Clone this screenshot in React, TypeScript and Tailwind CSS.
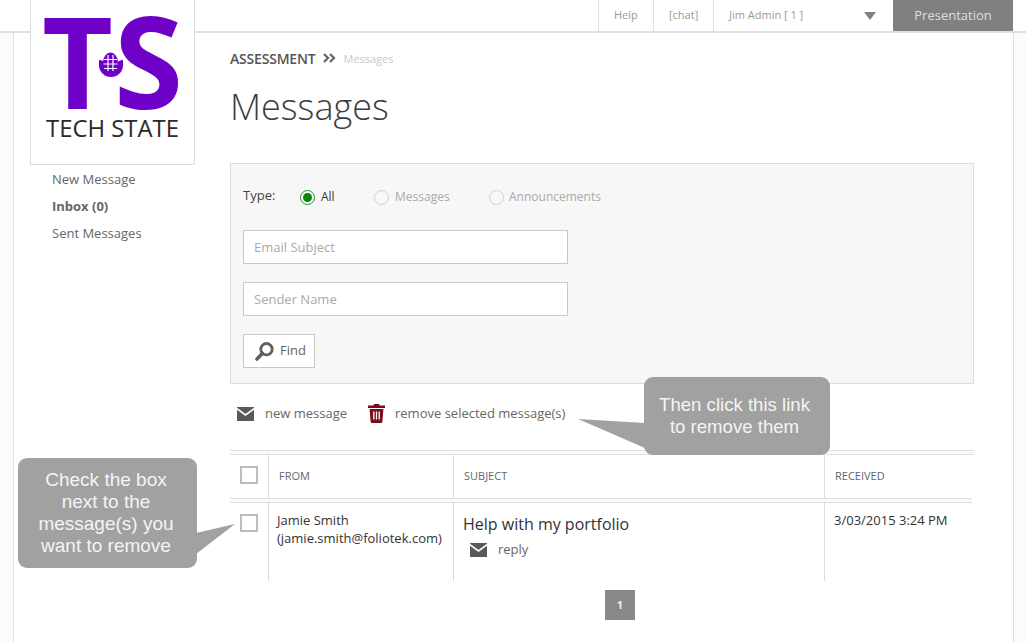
const Envelope = () => (
  <svg width="17" height="14" viewBox="0 0 17 14" className="shrink-0">
    <path d="M0 0h17v14H0z" fill="#595959" />
    <path d="M-0.5 1.5L8.5 8l9-6.5" fill="none" stroke="#fff" strokeWidth="1.6" />
  </svg>
);

const Trash = () => (
  <svg width="17" height="19" viewBox="0 0 17 19" className="shrink-0">
    <path d="M6 0h5l.6 1.6H17V4H0V1.6h5.4z" fill="#7a0c17" />
    <path d="M1.6 5h13.8l-1 12.4q-.1 1.600-1.700 1.600H4.300q-1.600 0-1.700-1.600z" fill="#7a0c17" />
    <path d="M5.800 7.500v8M8.500 7.500v8M11.200 7.500v8" stroke="#fff" strokeWidth="1.300" />
  </svg>
);

const Search = () => (
  <svg width="19" height="19" viewBox="0 0 19 19" className="shrink-0">
    <circle cx="11.500" cy="7.200" r="5.700" fill="none" stroke="#5f5f5f" strokeWidth="2.800" />
    <path d="M7.300 11.500L2 17" stroke="#5f5f5f" strokeWidth="3.600" strokeLinecap="round" />
  </svg>
);

const Chevrons = () => (
  <svg width="13" height="10" viewBox="0 0 13 10" className="shrink-0">
    <path d="M1 1l4 4-4 4M7 1l4 4-4 4" fill="none" stroke="#666" strokeWidth="2.200" />
  </svg>
);

const Radio = ({ on }: { on?: boolean }) => (
  <span
    className={
      on
        ? "flex h-[15px] w-[15px] shrink-0 items-center justify-center rounded-full border border-[#2b8a2b] bg-white"
        : "h-[15px] w-[15px] shrink-0 rounded-full border border-[#cfcfcf] bg-[#f7f7f7]"
    }
  >
    {on && <span className="h-[9px] w-[9px] rounded-full bg-[#0a860a]" />}
  </span>
);

const Checkbox = () => (
  <span className="block h-[18px] w-[18px] border-2 border-[#bdbdbd] bg-white" />
);

const Logo = () => (
  <svg width="163" height="163" viewBox="31 0 163 163" className="block">
    <text x="42" y="108.500" fontFamily="Open Sans" fontWeight="700" fontSize="127" fill="#6f00c8" textLength="71" lengthAdjust="spacingAndGlyphs">
      T
    </text>
    <text x="114" y="108.500" fontFamily="Open Sans" fontWeight="700" fontSize="127" fill="#6f00c8" textLength="69" lengthAdjust="spacingAndGlyphs">
      S
    </text>
    <path d="M99 60q4 0 6 3l6 8 6-8q2-3 6-3 1 10-4 14-3 3-8 3t-8-3q-5-4-4-14z" fill="#6f00c8" />
    <ellipse cx="110.500" cy="63" rx="7.500" ry="10.500" fill="#6f00c8" />
    <path d="M108 55v16M113 55v16M104 59.500h13M103.500 64h14M104 68.500h13" stroke="#fff" strokeWidth="1.200" />
    <text x="46" y="137" fontFamily="Open Sans" fontSize="24.500" fill="#2a2a2a" textLength="133" lengthAdjust="spacingAndGlyphs">
      TECH STATE
    </text>
  </svg>
);

const Cell = ({ className, children }: { className: string; children?: React.ReactNode }) => (
  <div className={"border-r border-[#dcdcdc] " + className}>{children}</div>
);

export default function App() {
  return (
    <div className="relative flex h-[642px] w-[1026px] flex-col overflow-hidden bg-white font-['Open_Sans',sans-serif] text-[13px] text-[#666]">
      {/* top bar */}
      <header className="flex h-[33px] shrink-0 items-stretch justify-end border-b-2 border-[#e0e0e0] pr-[13px] text-[11px] text-[#9a9a9a]">
        <div className="flex w-[55px] items-center border-l border-[#e0e0e0] pl-[15px]">Help</div>
        <div className="flex w-[60px] items-center border-l border-[#e0e0e0] pl-[15px]">[chat]</div>
        <div className="flex w-[180px] items-center justify-between border-l border-[#e0e0e0] pl-[15px] pr-[17px]">
          <span>Jim Admin [ 1 ]</span>
          <span className="h-0 w-0 border-x-[6.500px] border-t-[8px] border-x-transparent border-t-[#808080]" />
        </div>
        <div className="flex w-[120px] items-center justify-center bg-[#808080] text-[13px] text-[#dedede]">
          Presentation
        </div>
      </header>

      <div className="flex min-h-0 flex-1">
        <div className="w-[14px] shrink-0 border-r border-[#e0e0e0] bg-[#fbfbfb]" />

        {/* sidebar */}
        <aside className="w-[216px] shrink-0">
          <div className="relative z-10 ml-[16px] -mt-[33px] h-[165px] w-[165px] border border-t-0 border-[#dcdcdc] bg-white">
            <Logo />
          </div>
          <nav className="ml-[38px] mt-[1px] flex flex-col text-[13px] leading-[27px]">
            <span>New Message</span>
            <span className="font-bold">Inbox (0)</span>
            <span>Sent Messages</span>
          </nav>
        </aside>

        {/* content */}
        <main className="w-[744px] shrink-0">
          <div className="mt-[16px] flex h-[18px] items-center">
            <span className="text-[14px] font-semibold tracking-[-0.2px] text-[#555]">ASSESSMENT</span>
            <span className="ml-[8px]">
              <Chevrons />
            </span>
            <span className="ml-[7px] pt-[2px] text-[11px] text-[#c8c8c8]">Messages</span>
          </div>
          <h1 className="mt-[15px] text-[36px] font-light leading-[50px] text-[#3d3d3d]">Messages</h1>

          <section className="mt-[31px] h-[221px] border border-[#dcdcdc] bg-[#f7f7f7] pl-[12px]">
            <div className="mt-[23px] flex h-[20px] items-center text-[12px]">
              <span className="w-[57px] pb-[2px] text-[13px] text-[#444]">Type:</span>
              <Radio on />
              <span className="ml-[6px] w-[53px] text-[#333]">All</span>
              <Radio />
              <span className="ml-[6px] w-[94px] text-[#aaa]">Messages</span>
              <Radio />
              <span className="ml-[5px] text-[#aaa]">Announcements</span>
            </div>
            <div className="mt-[23px] flex h-[34px] w-[325px] items-center border border-[#c8c8c8] bg-white pl-[10px] pt-[1px] text-[#aaa]">
              Email Subject
            </div>
            <div className="mt-[18px] flex h-[34px] w-[325px] items-center border border-[#c8c8c8] bg-white pl-[10px] pt-[1px] text-[#aaa]">
              Sender Name
            </div>
            <button className="mt-[18px] flex h-[34px] w-[72px] items-center border border-[#c8c8c8] bg-white pl-[11px] text-[#666]">
              <Search />
              <span className="ml-[6px]">Find</span>
            </button>
          </section>

          <div className="ml-[7px] mt-[20px] flex h-[19px] items-center">
            <Envelope />
            <span className="ml-[11px] w-[103px]">new message</span>
            <Trash />
            <span className="ml-[10px]">remove selected message(s)</span>
          </div>

          <div className="mt-[27px] h-[5px] border-y border-[#dfdfdf] bg-[#fafafa]" />
          <div className="flex h-[43px] items-stretch text-[11px] text-[#666]">
            <Cell className="flex w-[39px] items-center pb-[4px] pl-[10px]">
              <Checkbox />
            </Cell>
            <Cell className="flex w-[185px] items-center pl-[10px]">FROM</Cell>
            <Cell className="flex w-[371px] items-center pl-[10px]">SUBJECT</Cell>
            <div className="flex items-center pl-[10px]">RECEIVED</div>
          </div>
          <div className="mr-[2px] h-[5px] border-y border-[#dfdfdf] bg-[#fafafa]" />
          <div className="flex h-[78px] items-stretch text-[13px] text-[#333]">
            <Cell className="w-[39px] pl-[10px] pt-[11px]">
              <Checkbox />
            </Cell>
            <Cell className="w-[185px] pl-[8px] pt-[8px] leading-[18px]">
              <div>Jamie Smith</div>
              <div>(jamie.smith@foliotek.com)</div>
            </Cell>
            <Cell className="w-[371px] pl-[9px] pt-[9px]">
              <div className="text-[16px] leading-[24px]">Help with my portfolio</div>
              <div className="ml-[7px] mt-[4px] flex items-center text-[13px] text-[#666]">
                <Envelope />
                <span className="ml-[11px]">reply</span>
              </div>
            </Cell>
            <div className="pl-[9px] pt-[8px] leading-[18px]">3/03/2015 3:24 PM</div>
          </div>
          <div className="ml-[375px] mt-[9px] flex h-[30px] w-[30px] items-center justify-center bg-[#888] text-[11px] font-bold text-[#eee]">
            1
          </div>
        </main>

        <div className="ml-auto w-[13px] shrink-0 border-l border-[#e0e0e0] bg-[#fbfbfb]" />
      </div>

      {/* annotation callouts */}
      <div className="absolute left-[644px] top-[377px] z-20 flex h-[78px] w-[186px] items-center justify-center rounded-[9px] bg-[#a1a1a1] pr-[5px] text-center font-['Liberation_Sans',sans-serif] text-[18.600px] leading-[22px] text-[#f4f4f4]">
        <span>
          Then click this link
          <br />
          to remove them
        </span>
        <svg width="68" height="30" viewBox="0 0 68 30" className="absolute left-[-66px] top-[41px]">
          <path d="M0 1L67 5v25z" fill="#a1a1a1" />
        </svg>
      </div>
      <div className="absolute left-[18px] top-[458px] z-20 flex h-[110px] w-[179px] items-center justify-center rounded-[9px] bg-[#a1a1a1] pr-[3px] text-center font-['Liberation_Sans',sans-serif] text-[19px] leading-[22px] text-[#f4f4f4]">
        <span>
          Check the box
          <br />
          next to the
          <br />
          message(s) you
          <br />
          want to remove
        </span>
        <svg width="40" height="32" viewBox="0 0 40 32" className="absolute left-[178px] top-[65px]">
          <path d="M39 1L0 10v21z" fill="#a1a1a1" />
        </svg>
      </div>
    </div>
  );
}
